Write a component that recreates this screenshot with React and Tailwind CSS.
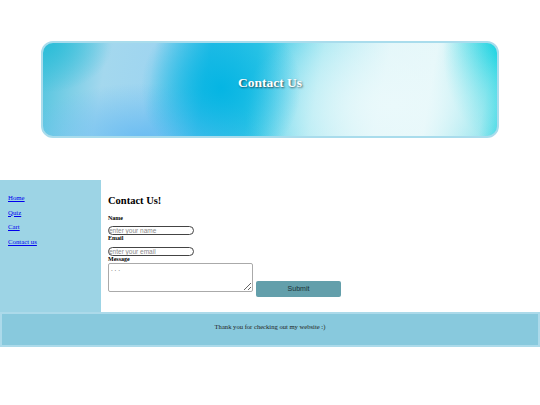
export default function App() {
  return (
    <div className="w-[540px] h-[405px] bg-white font-['Liberation_Serif',serif] text-black">
      {/* banner */}
      <div className="pt-[41px] px-[41px]">
        <div className="h-[97px] rounded-[12px] border-2 border-[#a9dcec] overflow-hidden bg-[radial-gradient(ellipse_80px_80px_at_178px_45px,#05b5e3_0%,rgba(5,181,227,0)_100%),radial-gradient(ellipse_120px_55px_at_100px_95px,#6cbdf2_0%,rgba(108,189,242,0)_100%),radial-gradient(ellipse_150px_90px_at_350px_62px,#eaf9fb_0%,rgba(234,249,251,0)_100%),radial-gradient(ellipse_60px_90px_at_460px_10px,#05d0df_0%,rgba(5,208,223,0)_100%),radial-gradient(ellipse_70px_50px_at_0px_0px,#2bbdd8_0%,rgba(43,189,216,0)_100%),linear-gradient(100deg,#50c4de_0%,#a4d8ee_14%,#9fd5f0_24%,#2dbde6_36%,#36c7e6_46%,#a8e8f2_60%,#e2f6f9_74%,#e6f7f9_84%,#7fe0ea_96%,#20d2e0_100%)] flex items-center justify-center">
          <h1 className="text-white font-bold text-[13.5px] leading-none [text-shadow:1px_1px_2px_rgba(0,0,0,0.6)] -mt-[14px]">
            Contact Us
          </h1>
        </div>
      </div>

      {/* sidebar + form */}
      <div className="mt-[42px] flex h-[132px]">
        <nav className="w-[101px] bg-[#9dd4e5] pl-[8px] pt-[14px] flex flex-col gap-[6px] text-[6.8px] leading-[8.5px]">
          <a href="#" className="text-[#0000ee] underline">Home</a>
          <a href="#" className="text-[#0000ee] underline">Quiz</a>
          <a href="#" className="text-[#0000ee] underline">Cart</a>
          <a href="#" className="text-[#0000ee] underline">Contact us</a>
        </nav>
        <div className="flex-1 pl-[7px] pt-[14px]">
          <h2 className="font-bold text-[10.5px] leading-[13px]">Contact Us!</h2>
          <form className="flex items-end gap-[3px]">
            <div className="flex flex-col">
              <label className="font-bold text-[6px] leading-[7px] mt-[8px]">Name</label>
              <input
                placeholder="enter your name"
                className="mt-[4px] w-[86px] h-[9px] border border-[#444] rounded-full px-0 text-[6.5px] leading-none font-['Liberation_Sans',sans-serif] placeholder:text-[#8a8a8a] outline-none"
              />
              <label className="font-bold text-[6px] leading-[7px]">Email</label>
              <input
                placeholder="enter your email"
                className="mt-[5px] w-[86px] h-[9px] border border-[#444] rounded-full px-0 text-[6.5px] leading-none font-['Liberation_Sans',sans-serif] placeholder:text-[#8a8a8a] outline-none"
              />
              <label className="font-bold text-[6px] leading-[7px]">Message</label>
              <textarea
                placeholder=". . ."
                className="mt-[0px] w-[145px] h-[29px] border border-[#aaa] rounded-[2px] px-[2px] py-[1px] text-[6.5px] leading-[8px] font-['Liberation_Sans',sans-serif] placeholder:text-[#555] outline-none resize-y"
              />
            </div>
            <button
              type="button"
              className="w-[85px] h-[16px] bg-[#639fab] rounded-[2px] text-[7px] font-['Liberation_Sans',sans-serif] text-[#1b2f35] mb-[-5px]"
            >
              Submit
            </button>
          </form>
        </div>
      </div>

      {/* footer */}
      <footer className="h-[35px] bg-[#88c9dd] border-2 border-[#acdaea] flex items-center justify-center pb-[5px] text-[6.6px] text-[#222]">
        Thank you for checking out my website :)
      </footer>
    </div>
  );
}
